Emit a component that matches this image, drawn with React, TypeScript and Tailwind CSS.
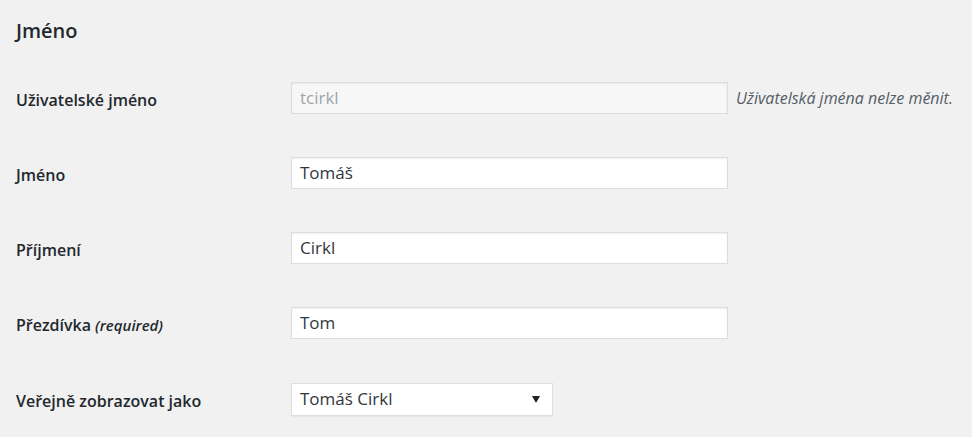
import { useState } from "react";

type Field = {
  label: string;
  extra?: string;
  value: string;
  disabled?: boolean;
  note?: string;
};

const fields: Field[] = [
  { label: "Uživatelské jméno", value: "tcirkl", disabled: true, note: "Uživatelská jména nelze měnit." },
  { label: "Jméno", value: "Tomáš" },
  { label: "Příjmení", value: "Cirkl" },
  { label: "Přezdívka", extra: "(required)", value: "Tom" },
];

export default function App() {
  const [values, setValues] = useState(fields.map((f) => f.value));

  return (
    <div className="w-[972px] h-[437px] bg-[#f1f1f1] text-[#32373c] font-['Open_Sans',sans-serif] overflow-hidden">
      <h2 className="pl-4 pt-[16px] h-[60px] text-[20px] font-semibold text-[#23282d]">Jméno</h2>

      {fields.map((f, i) => (
        <div key={f.label} className="flex items-center h-[75px] pl-4">
          <label className="w-[275px] pt-[5px] text-[16px] font-semibold text-[#23282d]">
            {f.label}
            {f.extra && <span className="italic text-[15px] ml-1">{f.extra}</span>}
          </label>
          <input
            className={
              "w-[437px] h-[32px] px-2 text-[17px] border border-[#dddddd] shadow-[inset_0_1px_2px_rgba(0,0,0,0.07)] outline-none " +
              (f.disabled ? "bg-[#f7f7f7] text-[#a0a5aa]" : "bg-white text-[#32373c]")
            }
            value={values[i]}
            disabled={f.disabled}
            onChange={(e) => setValues(values.map((v, j) => (j === i ? e.target.value : v)))}
          />
          {f.note && <span className="ml-2 text-[16px] italic text-[#555d66]">{f.note}</span>}
        </div>
      ))}

      <div className="flex items-center h-[75px] pl-4 pt-[3px]">
        <label className="w-[275px] pt-[3px] text-[16px] font-semibold text-[#23282d]">Veřejně zobrazovat jako</label>
        <div className="w-[262px] h-[33px] flex items-center justify-between pl-2 pr-3 bg-white border border-[#dddddd] shadow-[0_1px_1px_rgba(0,0,0,0.04)]">
          <span className="text-[17px]">Tomáš Cirkl</span>
          <svg width="8" height="7" viewBox="0 0 8 7">
            <path d="M0 0h8L4 7z" fill="#222" />
          </svg>
        </div>
      </div>
    </div>
  );
}
